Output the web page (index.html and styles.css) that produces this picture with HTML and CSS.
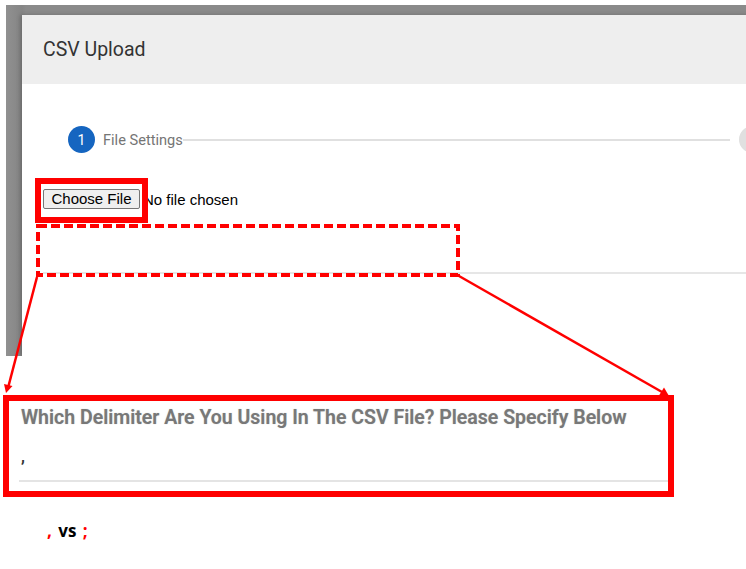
FILE: index.html
```html
<!DOCTYPE html>
<html lang="en">
<head>
<meta charset="utf-8">
<title>CSV Upload – delimiter</title>
<link rel="stylesheet" href="styles.css">
</head>
<body>
<div class="page">
  <div class="shot">
    <div class="modal">
      <div class="modal-header">CSV Upload</div>
      <div class="modal-body">
        <div class="stepper">
          <span class="step-dot active">1</span>
          <span class="step-label">File Settings</span>
          <span class="step-line"></span>
          <span class="step-dot"></span>
        </div>
        <div class="file-row">
          <button class="choose" type="button">Choose File</button>
          <span class="no-file">No file chosen</span>
        </div>
        <div class="hidden-field"></div>
      </div>
    </div>
  </div>

  <div class="zoombox">
    <div class="zoom-label">Which Delimiter Are You Using In The CSV File? Please Specify Below</div>
    <div class="zoom-field">,</div>
  </div>

  <p class="versus"><span class="red">,</span> vs <span class="red">;</span></p>

  <div class="mark-solid"></div>
  <svg class="annot" width="746" height="569" viewBox="0 0 746 569">
    <rect x="38" y="226" width="420" height="49" fill="none" stroke="#ff0000" stroke-width="4" stroke-dasharray="9 4"/>
    <line x1="37" y1="277" x2="8.5" y2="386" stroke="#ff0000" stroke-width="2.5"/>
    <polygon points="6,393 4,384 12.5,386" fill="#ff0000"/>
    <line x1="459" y1="276" x2="662" y2="392" stroke="#ff0000" stroke-width="2.5"/>
    <polygon points="669,396 659,395.5 664,387.5" fill="#ff0000"/>
  </svg>
</div>
</body>
</html>
```

FILE: styles.css
```css
* { box-sizing: border-box; }

body {
  margin: 0;
  background: #ffffff;
  font-family: Roboto, "Liberation Sans", Arial, sans-serif;
}

.page {
  position: relative;
  width: 746px;
  height: 569px;
  overflow: hidden;
}

.shot {
  margin: 5px 0 0 6px;
  height: 351px;
  padding: 10px 0 0 16px;
  background: linear-gradient(90deg, #909090 0, #858585 16px, #8a8a8a 20px);
  overflow: hidden;
}

.modal {
  width: 790px;
  height: 100%;
  background: #ffffff;
  box-shadow: -2px 0 4px rgba(0, 0, 0, 0.2);
}

.modal-header {
  height: 69px;
  padding-left: 21px;
  display: flex;
  align-items: center;
  background: #eeeeee;
  color: #333333;
  font-size: 19.5px;
}

.modal-body {
  padding: 42px 0 0 21px;
}

.stepper {
  display: flex;
  align-items: center;
  padding: 0 46px 0 25px;
}

.step-dot {
  width: 27px;
  height: 27px;
  border-radius: 50%;
  background: #e0e0e0;
  flex: none;
  display: flex;
  align-items: center;
  justify-content: center;
  color: #ffffff;
  font-size: 14px;
}

.step-dot.active {
  background: #1565c0;
}

.step-label {
  margin-left: 8px;
  color: #757575;
  font-size: 14.6px;
}

.step-line {
  flex: 1;
  height: 2px;
  margin-right: 9px;
  background: #e0e0e0;
}

.file-row {
  margin-top: 36px;
  display: flex;
  align-items: center;
  height: 20px;
  font-family: "Liberation Sans", Arial, sans-serif;
  font-size: 15px;
  color: #000000;
}

.choose {
  width: 97px;
  height: 20px;
  padding: 0;
  margin: 0 3px 0 0;
  border: 1px solid #767676;
  border-radius: 2px;
  background: #efefef;
  color: #000000;
  font: 15px/18px "Liberation Sans", Arial, sans-serif;
}

.hidden-field {
  height: 65px;
  border-bottom: 2px solid #e6e6e6;
}

.zoombox {
  margin: 39px 0 0 3px;
  width: 671px;
  height: 102px;
  border: 6px solid #ff0000;
  padding-left: 10px;
}

.zoom-label {
  margin-top: 5px;
  padding-left: 2px;
  font-size: 19.5px;
  line-height: 23px;
  font-weight: 600;
  color: #787878;
  white-space: nowrap;
  text-shadow: 0 0 1px rgba(120, 120, 120, 0.5);
}

.zoom-field {
  height: 53px;
  padding: 19px 0 0 2px;
  border-bottom: 2px solid #e4e4e4;
  font-size: 16px;
  line-height: 18px;
  font-weight: 700;
  color: #333333;
}

.versus {
  margin: 24px 0 0 47px;
  font: 700 17px/20px "Open Sans", "Liberation Sans", sans-serif;
  word-spacing: 2px;
  color: #000000;
}

.red {
  color: #ff0000;
}

.mark-solid {
  position: absolute;
  left: 35px;
  top: 178px;
  width: 113px;
  height: 45px;
  border: 6px solid #ff0000;
}

.annot {
  position: absolute;
  left: 0;
  top: 0;
  pointer-events: none;
}
```
